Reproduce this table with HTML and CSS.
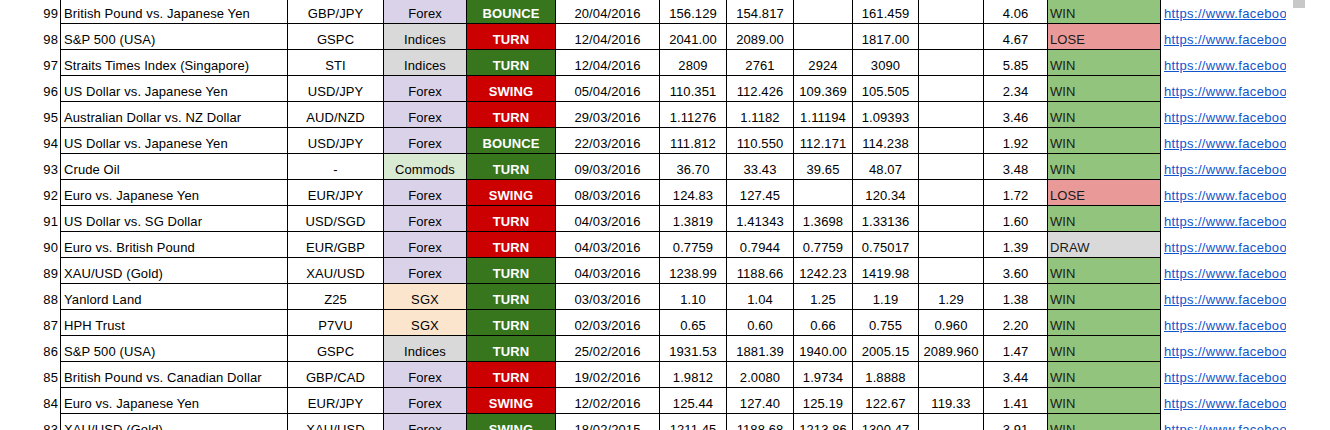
FILE: index.html
```html
<!DOCTYPE html>
<html>
<head>
<meta charset="utf-8">
<link rel="stylesheet" href="styles.css">
</head>
<body>
<div class="page">
  <div class="sheet">
    <div class="grid" id="grid"></div>
  </div>
  <div class="scroll"><div class="thumb"></div></div>
</div>
<script src="app.js"></script>
</body>
</html>
```
FILE: styles.css
```css
html, body {
  margin: 0;
  padding: 0;
  background: #fff;
  overflow: hidden;
  height: 430px;
}
.page {
  display: flex;
  align-items: flex-start;
  font-family: "Liberation Sans", Arial, sans-serif;
  font-size: 13px;
  color: #000;
}
.sheet {
  width: 1286px;
  height: 430px;
  overflow: hidden;
}
.grid {
  display: grid;
  grid-template-columns: 60px 227px 96px 83px 89px 104px 67px 67px 59px 66px 65px 64px 113px 140px;
  grid-auto-rows: 26px;
  margin-top: -2px;
}
.c {
  box-sizing: border-box;
  height: 26px;
  padding-top: 8px;
  line-height: 16px;
  letter-spacing: 0.1px;
  white-space: nowrap;
  overflow: hidden;
  border-left: 1px solid #000;
  border-bottom: 1px solid #000;
  text-align: center;
}
.num {
  border: none;
  text-align: right;
  padding-right: 2px;
}
.name {
  text-align: left;
  padding-left: 3px;
}
.link {
  border-bottom: none;
  text-align: left;
  padding-left: 3px;
  letter-spacing: 0.35px;
  color: #1155cc;
  text-decoration: underline;
}
.res {
  text-align: left;
  padding-left: 2px;
  color: #1a1a1a;
}
.sig {
  color: #fff;
  font-weight: bold;
}
.forex { background: #d9d2e9; }
.indices { background: #d9d9d9; }
.commods { background: #d9ead3; }
.sgx { background: #fce5cd; }
.green { background: #38761d; }
.red { background: #cc0000; }
.win { background: #93c47d; }
.lose { background: #ea9999; }
.draw { background: #d9d9d9; }
.scroll {
  margin-left: 7px;
  width: 12px;
}
.thumb {
  height: 8px;
  background: #c8c8c8;
}
```
FILE: app.js
```js
const rows = [
  [99,"British Pound vs. Japanese Yen","GBP/JPY","Forex","BOUNCE","green","20/04/2016","156.129","154.817","","161.459","","4.06","WIN"],
  [98,"S&P 500 (USA)","GSPC","Indices","TURN","red","12/04/2016","2041.00","2089.00","","1817.00","","4.67","LOSE"],
  [97,"Straits Times Index (Singapore)","STI","Indices","TURN","green","12/04/2016","2809","2761","2924","3090","","5.85","WIN"],
  [96,"US Dollar vs. Japanese Yen","USD/JPY","Forex","SWING","red","05/04/2016","110.351","112.426","109.369","105.505","","2.34","WIN"],
  [95,"Australian Dollar vs. NZ Dollar","AUD/NZD","Forex","TURN","red","29/03/2016","1.11276","1.1182","1.11194","1.09393","","3.46","WIN"],
  [94,"US Dollar vs. Japanese Yen","USD/JPY","Forex","BOUNCE","green","22/03/2016","111.812","110.550","112.171","114.238","","1.92","WIN"],
  [93,"Crude Oil","-","Commods","TURN","green","09/03/2016","36.70","33.43","39.65","48.07","","3.48","WIN"],
  [92,"Euro vs. Japanese Yen","EUR/JPY","Forex","SWING","red","08/03/2016","124.83","127.45","","120.34","","1.72","LOSE"],
  [91,"US Dollar vs. SG Dollar","USD/SGD","Forex","TURN","red","04/03/2016","1.3819","1.41343","1.3698","1.33136","","1.60","WIN"],
  [90,"Euro vs. British Pound","EUR/GBP","Forex","TURN","red","04/03/2016","0.7759","0.7944","0.7759","0.75017","","1.39","DRAW"],
  [89,"XAU/USD (Gold)","XAU/USD","Forex","TURN","green","04/03/2016","1238.99","1188.66","1242.23","1419.98","","3.60","WIN"],
  [88,"Yanlord Land","Z25","SGX","TURN","green","03/03/2016","1.10","1.04","1.25","1.19","1.29","1.38","WIN"],
  [87,"HPH Trust","P7VU","SGX","TURN","green","02/03/2016","0.65","0.60","0.66","0.755","0.960","2.20","WIN"],
  [86,"S&P 500 (USA)","GSPC","Indices","TURN","green","25/02/2016","1931.53","1881.39","1940.00","2005.15","2089.960","1.47","WIN"],
  [85,"British Pound vs. Canadian Dollar","GBP/CAD","Forex","TURN","red","19/02/2016","1.9812","2.0080","1.9734","1.8888","","3.44","WIN"],
  [84,"Euro vs. Japanese Yen","EUR/JPY","Forex","SWING","red","12/02/2016","125.44","127.40","125.19","122.67","119.33","1.41","WIN"],
  [83,"XAU/USD (Gold)","XAU/USD","Forex","SWING","green","18/02/2015","1211.45","1188.68","1213.86","1300.47","","3.91","WIN"]
];
const grid = document.getElementById("grid");
function cell(cls, text) {
  const d = document.createElement("div");
  d.className = "c " + cls;
  d.textContent = text;
  grid.appendChild(d);
}
rows.forEach(r => {
  cell("num", r[0]);
  cell("name", r[1]);
  cell("sym", r[2]);
  cell(r[3].toLowerCase(), r[3]);
  cell("sig " + r[5], r[4]);
  cell("date", r[6]);
  for (let i = 7; i <= 12; i++) cell("val", r[i]);
  cell("res " + r[13].toLowerCase(), r[13]);
  cell("link", "https://www.facebook.com/");
});
```
